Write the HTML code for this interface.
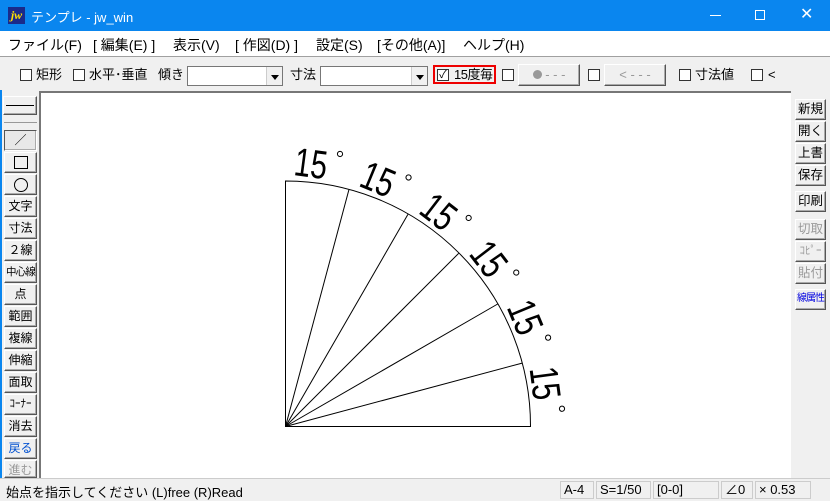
<!DOCTYPE html>
<html><head><meta charset="utf-8"><style>
*{margin:0;padding:0;box-sizing:border-box}
body{width:830px;height:500px;overflow:hidden;background:#f0f0f0;font-family:"Liberation Sans","Noto Sans CJK JP",sans-serif;position:relative;font-size:13px;color:#000}
.a{position:absolute}
#title{left:0;top:0;width:830px;height:31px;background:#0a86ef;color:#fff}
#menu{left:0;top:31px;width:830px;height:26px;background:#fff;border-bottom:1px solid #a0a0a0}
#menu span{position:absolute;top:4px;font-size:14px}
.cb{position:absolute;width:12px;height:12px;border:1px solid #333;background:#fff}
.lbl{position:absolute;font-size:13px;line-height:16px;white-space:nowrap}
.combo{position:absolute;height:20px;border:1px solid #777;background:#fff}
.combo i{position:absolute;right:0;top:0;width:16px;height:18px;background:#f0f0f0;border-left:1px solid #ccc}
.combo i:after{content:"";position:absolute;left:4px;top:8px;border:4px solid transparent;border-top:5px solid #000}
.btn{position:absolute;background:#f0f0f0;border:1px solid;border-color:#fff #555 #555 #fff;box-shadow:inset -1px -1px #aaa;font-size:12px;text-align:center;line-height:18px;white-space:nowrap;overflow:hidden}
.lb{left:4px;width:33px;height:21px}
.rb{left:795px;width:31px;height:21px;font-size:12.5px}
.dis{color:#9a9a9a}
#canvas{left:39px;top:91px;width:752px;height:387px;background:#fff;border-top:2px solid #777;border-left:2px solid #777}
#status{left:0;top:478px;width:830px;height:22px;background:#f0f0f0;border-top:1px solid #ccc}
.sp{position:absolute;top:2px;height:18px;border:1px solid #ccc;font-size:13px;line-height:16px;padding-left:3px}
</style></head><body>
<div id="title" class="a">
 <div class="a" style="left:8px;top:7px;width:17px;height:17px;background:#1a2a8a;color:#ffe000;font:italic bold 12px 'Liberation Serif',serif;line-height:17px;text-align:center">jw</div>
 <div class="a" style="left:31px;top:7px;font-size:13px">テンプレ - jw_win</div>
 <div class="a" style="left:710px;top:15px;width:11px;height:1px;background:#fff"></div>
 <div class="a" style="left:755px;top:10px;width:10px;height:10px;border:1px solid #fff"></div>
 <div class="a" style="left:800px;top:8px;color:#fff;font-size:16px;line-height:14px">✕</div>
</div>
<div id="menu" class="a">
 <span style="left:8px">ファイル(F)</span>
 <span style="left:93px">[ 編集(E) ]</span>
 <span style="left:173px">表示(V)</span>
 <span style="left:235px">[ 作図(D) ]</span>
 <span style="left:316px">設定(S)</span>
 <span style="left:377px">[その他(A)]</span>
 <span style="left:463px">ヘルプ(H)</span>
</div>
<!-- toolbar -->
<div class="cb" style="left:20px;top:69px"></div><div class="lbl" style="left:36px;top:67px">矩形</div>
<div class="cb" style="left:73px;top:69px"></div><div class="lbl" style="left:89px;top:67px">水平･垂直</div>
<div class="lbl" style="left:158px;top:67px">傾き</div>
<div class="combo" style="left:187px;top:66px;width:96px"><i></i></div>
<div class="lbl" style="left:290px;top:67px">寸法</div>
<div class="combo" style="left:320px;top:66px;width:108px"><i></i></div>
<div class="a" style="left:433px;top:65px;width:63px;height:19px;border:2px solid #e00"></div>
<div class="cb" style="left:437px;top:69px;font-size:11px;line-height:10px;text-align:center">✓</div>
<div class="lbl" style="left:454px;top:67px;letter-spacing:-0.5px">15度毎</div>
<div class="cb" style="left:502px;top:69px"></div>
<div class="btn" style="left:518px;top:64px;width:62px;height:22px;color:#999;font-size:13px;line-height:19px"><span style="display:inline-block;width:9px;height:9px;border-radius:50%;background:#999"></span> - - -</div>
<div class="cb" style="left:588px;top:69px"></div>
<div class="btn" style="left:604px;top:64px;width:62px;height:22px;color:#999;font-size:13px;line-height:19px">&lt; - - -</div>
<div class="cb" style="left:679px;top:69px"></div><div class="lbl" style="left:695px;top:67px">寸法値</div>
<div class="cb" style="left:751px;top:69px"></div><div class="lbl" style="left:768px;top:67px">&lt;</div>
<div class="a" style="left:0;top:90px;width:2px;height:410px;background:#0a86ef"></div>
<!-- left toolbar -->
<div class="btn" style="left:3px;top:96px;width:34px;height:19px"><div class="a" style="left:2px;top:8px;width:28px;height:1px;background:#000"></div></div>
<div class="a" style="left:4px;top:122px;width:33px;height:1px;background:#999"></div>
<div class="btn lb" style="top:130px;border-color:#555 #fff #fff #555;background:#e8e8e8">／</div>
<div class="btn lb" style="top:152px"><div class="a" style="left:9px;top:3px;width:14px;height:13px;border:1px solid #000"></div></div>
<div class="btn lb" style="top:174px"><div class="a" style="left:9px;top:3px;width:14px;height:14px;border:1px solid #000;border-radius:50%"></div></div>
<div class="btn lb" style="top:196px">文字</div>
<div class="btn lb" style="top:218px">寸法</div>
<div class="btn lb" style="top:240px">２線</div>
<div class="btn lb" style="top:262px;font-size:10.5px;letter-spacing:-0.8px">中心線</div>
<div class="btn lb" style="top:284px">点</div>
<div class="btn lb" style="top:306px">範囲</div>
<div class="btn lb" style="top:328px">複線</div>
<div class="btn lb" style="top:350px">伸縮</div>
<div class="btn lb" style="top:372px">面取</div>
<div class="btn lb" style="top:394px;font-size:11px">ｺｰﾅｰ</div>
<div class="btn lb" style="top:416px">消去</div>
<div class="btn lb" style="top:438px;color:#0050d0">戻る</div>
<div class="btn lb dis" style="top:460px;height:18px">進む</div>
<!-- right toolbar -->
<div class="btn rb" style="top:99px">新規</div>
<div class="btn rb" style="top:121px">開く</div>
<div class="btn rb" style="top:143px">上書</div>
<div class="btn rb" style="top:165px">保存</div>
<div class="btn rb" style="top:191px">印刷</div>
<div class="btn rb dis" style="top:219px">切取</div>
<div class="btn rb dis" style="top:241px;font-size:11px">ｺﾋﾟｰ</div>
<div class="btn rb dis" style="top:263px">貼付</div>
<div class="btn rb" style="top:289px;color:#0000e0;font-size:10px;letter-spacing:-1px">線属性</div>
<div id="canvas" class="a"></div>
<svg class="a" style="left:0;top:0" width="830" height="500">
 <g fill="none" stroke="#000" stroke-width="1">
  <path d="M285.5 426.5 V181 A245 245 0 0 1 530.5 426.5 Z"/>
  <line x1="285.5" y1="426.5" x2="348.9" y2="189.8"/>
  <line x1="285.5" y1="426.5" x2="408" y2="214.3"/>
  <line x1="285.5" y1="426.5" x2="458.7" y2="253.3"/>
  <line x1="285.5" y1="426.5" x2="497.7" y2="304"/>
  <line x1="285.5" y1="426.5" x2="522.2" y2="363.1"/>
 </g>
 <defs><g id="lab"><g transform="rotate(7.5 293 174)"><text x="293" y="175" font-family="Liberation Sans" font-size="40" transform="translate(293 175) scale(0.74 1) translate(-293 -175)">15</text><circle cx="337" cy="148" r="2.6" fill="none" stroke="#000" stroke-width="1"/></g></g></defs>
 <use href="#lab"/>
 <use href="#lab" transform="rotate(15 285 426)"/>
 <use href="#lab" transform="rotate(30 285 426)"/>
 <use href="#lab" transform="rotate(45 285 426)"/>
 <use href="#lab" transform="rotate(60 285 426)"/>
 <use href="#lab" transform="rotate(75 285 426)"/>
</svg>
<div id="status" class="a">
 <div class="a" style="left:6px;top:3px;font-size:13px">始点を指示してください (L)free (R)Read</div>
 <div class="sp" style="left:560px;width:34px">A-4</div>
 <div class="sp" style="left:596px;width:55px">S=1/50</div>
 <div class="sp" style="left:653px;width:66px">[0-0]</div>
 <div class="sp" style="left:721px;width:32px">∠0</div>
 <div class="sp" style="left:755px;width:56px">× 0.53</div>
</div>
</body></html>
